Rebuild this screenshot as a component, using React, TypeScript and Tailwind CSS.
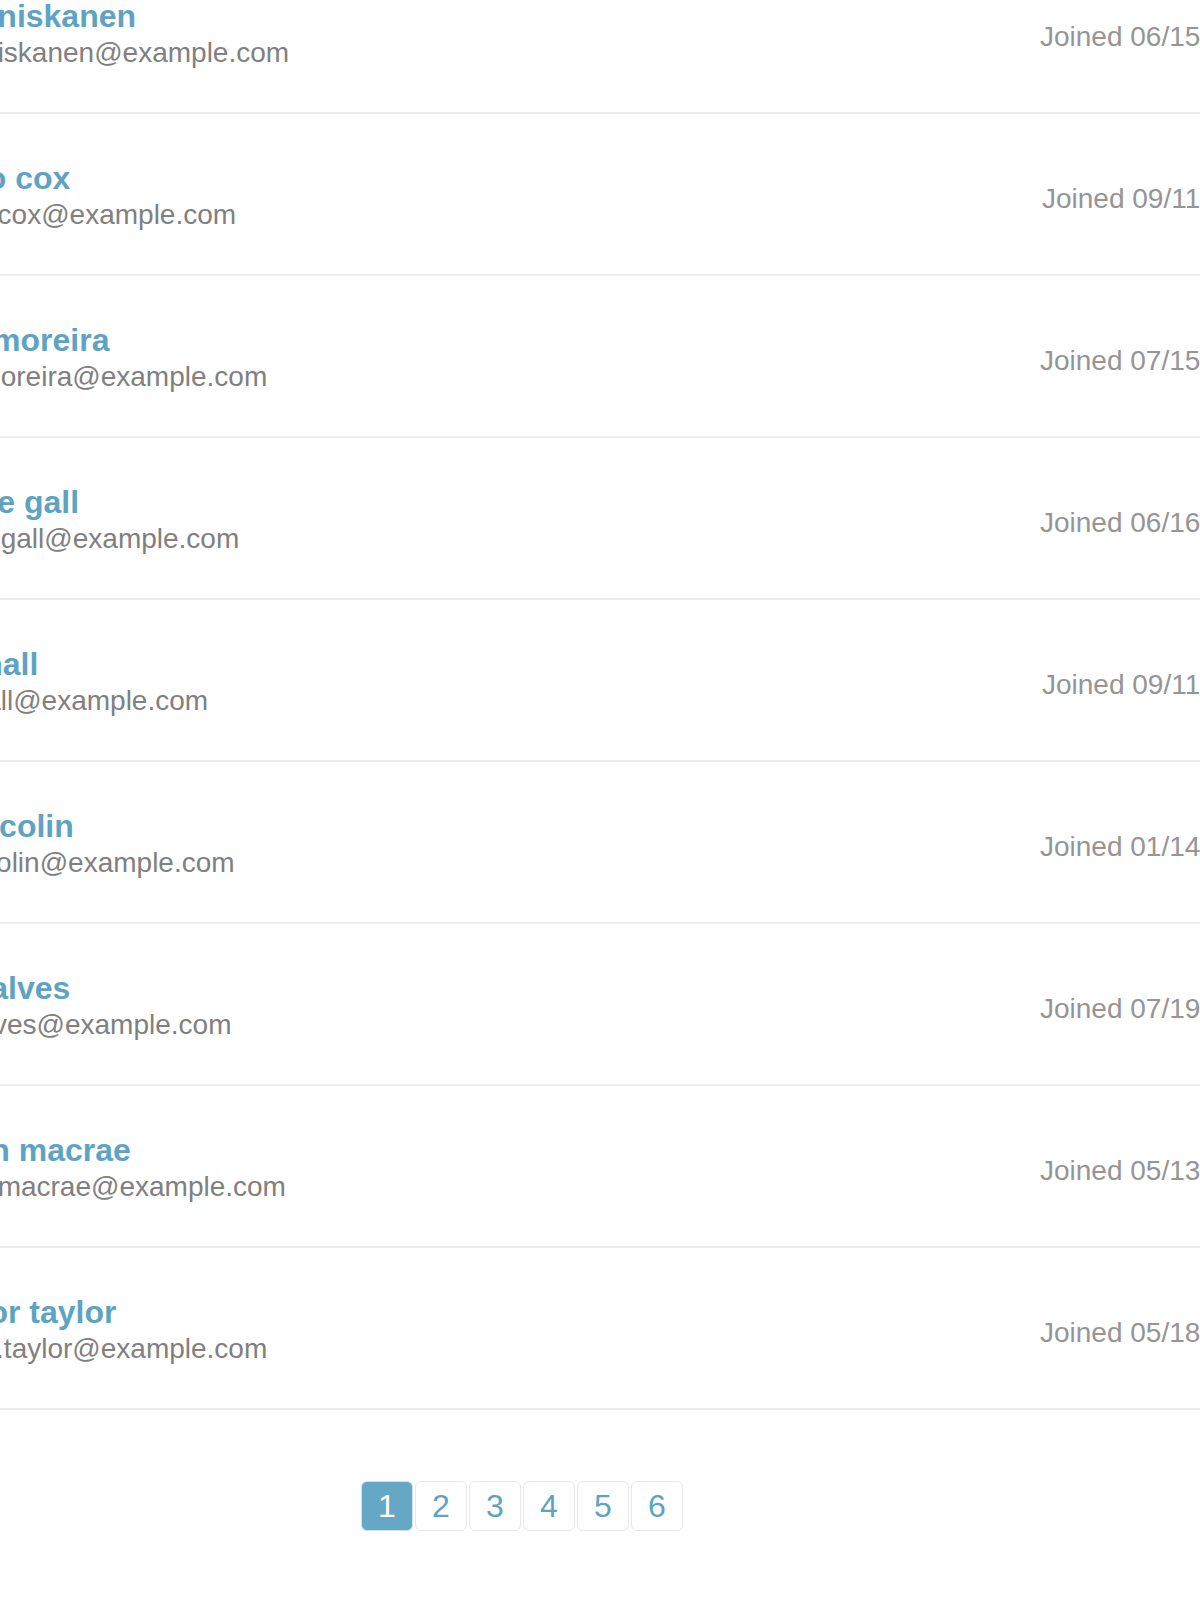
import React from "react";

type User = { first: string; last: string; joined: string; shift?: boolean };

const users: User[] = [
  { first: "oona", last: "niskanen", joined: "06/15" },
  { first: "mateo", last: "cox", joined: "09/11", shift: true },
  { first: "elisa", last: "moreira", joined: "07/15" },
  { first: "justine", last: "gall", joined: "06/16" },
  { first: "jack", last: "hall", joined: "09/11", shift: true },
  { first: "hugo", last: "colin", joined: "01/14" },
  { first: "vitor", last: "alves", joined: "07/19" },
  { first: "jordan", last: "macrae", joined: "05/13" },
  { first: "connor", last: "taylor", joined: "05/18" },
];

export default function App() {
  return (
    <div
      className="w-[1200px] h-[1600px] overflow-hidden bg-white"
      style={{ fontFamily: '"Liberation Sans", Arial, Helvetica, sans-serif' }}
    >
      <div className="ml-[-88px] mt-[-48px] w-[1400px]">
        {users.map((u) => (
          <div
            key={u.last}
            className="flex items-start h-[162px] border-b-2 border-[#ececec]"
          >
            <div className="w-[1128px] shrink-0 pt-[46px]">
              <div className="text-[32px] leading-[36px] font-bold text-[#5ea3c3] whitespace-nowrap">
                {u.first} {u.last}
              </div>
              <div className="mt-[1px] text-[28px] leading-[36px] text-[#808080] whitespace-nowrap">
                {u.first}.{u.last}@example.com
              </div>
            </div>
            <div
              className={
                u.shift
                  ? "pt-[67px] pl-[2px] text-[28px] leading-[36px] text-[#959595] whitespace-nowrap"
                  : "pt-[67px] text-[28px] leading-[36px] text-[#959595] whitespace-nowrap"
              }
            >
              Joined {u.joined}
            </div>
          </div>
        ))}
      </div>
      <div className="flex gap-[2px] ml-[361px] mt-[71px]">
        {[1, 2, 3, 4, 5, 6].map((n) => (
          <div
            key={n}
            className={
              n === 1
                ? "w-[52px] h-[50px] flex items-center justify-center rounded-[6px] border border-[#cfe2eb] bg-[#66a7c5] text-white text-[32px] leading-none"
                : "w-[52px] h-[50px] flex items-center justify-center rounded-[6px] border border-[#e8e8e8] bg-white text-[#5ea3c3] text-[32px] leading-none"
            }
          >
            {n}
          </div>
        ))}
      </div>
    </div>
  );
}
